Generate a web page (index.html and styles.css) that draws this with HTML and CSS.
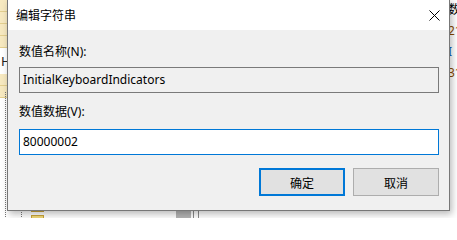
FILE: index.html
```html
<!DOCTYPE html>
<html lang="zh-CN">
<head>
<meta charset="utf-8">
<title>编辑字符串</title>
<link rel="stylesheet" href="styles.css">
</head>
<body>
<div class="stage">
  <div class="bg-left">
    <div class="row"></div>
    <div class="row"></div>
    <div class="row"></div>
    <div class="row"></div>
    <div class="row h">H</div>
    <div class="row"></div>
    <div class="row"></div>
  </div>
  <div class="dots dots-a"></div>
  <div class="dots dots-b"></div>
  <div class="folder folder-a"></div>
  <div class="folder folder-b"></div>
  <div class="scroll-thumb"></div>
  <div class="vline vline-a"></div>
  <div class="vline vline-b"></div>
  <div class="bg-right">
    <span class="frag">数</span>
    <span class="frag brown">21</span>
    <span class="frag blue">I</span>
    <span class="frag brown">31</span>
  </div>

  <div class="dialog">
    <div class="titlebar">
      <span class="title">编辑字符串</span>
      <svg class="close" width="11" height="11" viewBox="0 0 11 11">
        <path d="M0.5 0.5 L10.5 10.5 M10.5 0.5 L0.5 10.5" stroke="#000" stroke-width="1" fill="none"/>
      </svg>
    </div>
    <div class="body">
      <div class="label label-name">数值名称(N):</div>
      <div class="field readonly">InitialKeyboardIndicators</div>
      <div class="label label-data">数值数据(V):</div>
      <div class="field editable">80000002</div>
      <div class="buttons">
        <div class="btn default">确定</div>
        <div class="btn">取消</div>
      </div>
    </div>
  </div>
</div>
</body>
</html>
```
FILE: styles.css
```css
* { box-sizing: border-box; }
html, body { margin: 0; padding: 0; }
body {
  width: 457px;
  height: 218px;
  overflow: hidden;
  background: #ffffff;
  font-family: "Noto Sans", "Noto Sans CJK SC", sans-serif;
  font-size: 12px;
  color: #000;
}
.stage {
  position: relative;
  width: 457px;
  height: 218px;
  overflow: hidden;
  background: #ffffff;
}

/* background window fragments */
.bg-left {
  position: absolute;
  left: 0;
  top: 0;
  width: 8px;
  display: flex;
  flex-direction: column;
}
.bg-left .row {
  height: 12px;
  background: #f7e9c0;
  border-bottom: 1px solid #e3cf8f;
  font-size: 13px;
  line-height: 12px;
  color: #222;
}
.bg-left .row.h {
  background: #ffffff;
  border-bottom: none;
  height: 26px;
  line-height: 26px;
  padding-left: 1px;
}
.dots {
  position: absolute;
  width: 1px;
  background-image: linear-gradient(#777 50%, transparent 50%);
  background-size: 1px 2px;
}
.dots-a { left: 5px; top: 92px; height: 126px; }
.dots-b { left: 21px; top: 208px; height: 10px; }
.folder {
  position: absolute;
  left: 31px;
  width: 13px;
  height: 4px;
  background: #e6c458;
  border: 1px solid #c9a53a;
}
.folder-a { top: 208px; }
.folder-b { top: 215px; height: 5px; background: #f0d878; }
.scroll-thumb {
  position: absolute;
  left: 176px;
  top: 208px;
  width: 15px;
  height: 10px;
  background: #b4b4b4;
}
.vline {
  position: absolute;
  top: 208px;
  width: 1px;
  height: 10px;
  background: #8a8a8a;
}
.vline-a { left: 193px; }
.vline-b { left: 198px; }
.bg-right {
  position: absolute;
  left: 448px;
  top: -1px;
  display: flex;
  flex-direction: column;
  font-size: 12px;
  line-height: 21px;
}
.frag { display: block; }
.frag.brown { color: #8a4a00; }
.frag.blue { color: #1560bd; }

/* dialog window */
.dialog {
  position: absolute;
  left: 7px;
  top: -1px;
  width: 443px;
  height: 212px;
  background: #f0f0f0;
  border: 1px solid #777777;
  box-shadow: 2px 3px 7px rgba(0, 0, 0, 0.28);
  display: flex;
  flex-direction: column;
}
.titlebar {
  height: 30px;
  background: #ffffff;
  display: flex;
  align-items: center;
  justify-content: space-between;
  padding: 0 9px 0 8px;
  flex-shrink: 0;
}
.title {
  font-family: "Noto Sans CJK SC", sans-serif;
  font-size: 12px;
  line-height: 16px;
}
.close { display: block; }
.body {
  display: flex;
  flex-direction: column;
  padding: 14px 10px 0 11px;
}
.label {
  font-family: "Noto Sans", "Noto Sans CJK SC", sans-serif;
  line-height: 16px;
  height: 16px;
}
.label-name { margin-bottom: 7px; }
.label-data { margin-top: 11px; margin-bottom: 9px; }
.field {
  height: 26px;
  width: 420px;
  padding-left: 3px;
  line-height: 24px;
  font-family: "Noto Sans", sans-serif;
  font-size: 12px;
  white-space: nowrap;
}
.field.readonly {
  background: #f0f0f0;
  border: 1px solid #7a7a7a;
}
.field.editable {
  background: #ffffff;
  border: 1px solid #0078d7;
}
.buttons {
  display: flex;
  justify-content: flex-end;
  gap: 8px;
  margin-top: 13px;
  width: 420px;
}
.btn {
  width: 86px;
  height: 28px;
  background: #e1e1e1;
  border: 1px solid #adadad;
  display: flex;
  align-items: center;
  justify-content: center;
  font-family: "Noto Sans CJK SC", sans-serif;
  font-size: 12px;
}
.btn.default {
  border: 2px solid #0078d7;
}
```
